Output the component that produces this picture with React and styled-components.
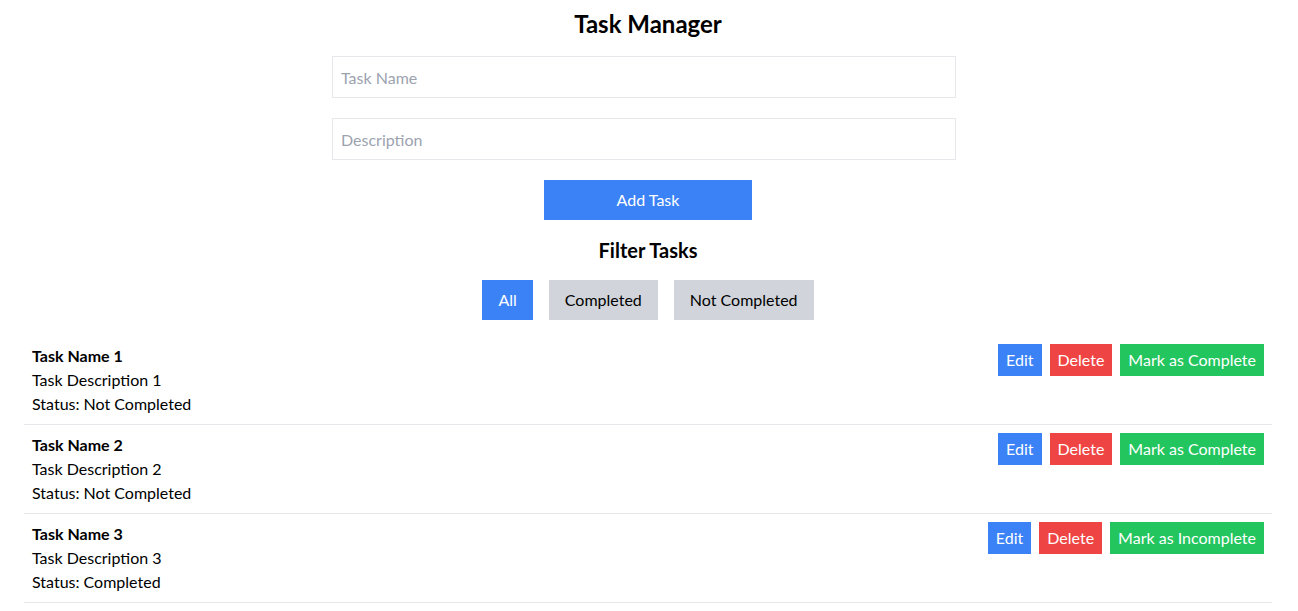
import React, { useState } from "react";
import styled, { createGlobalStyle } from "styled-components";

const GlobalStyle = createGlobalStyle`
  * {
    box-sizing: border-box;
  }
  body {
    margin: 0;
    background: #ffffff;
    color: #000000;
    font-family: "Segoe UI", Lato, "Noto Sans", sans-serif;
    font-size: 16px;
    line-height: 24px;
  }
`;

const Container = styled.div`
  width: 1248px;
  margin: 0 0 0 24px;
  padding-top: 8px;
`;

const Title = styled.h1`
  margin: 0 0 16px;
  font-size: 24px;
  line-height: 32px;
  font-weight: 700;
  text-align: center;
`;

const Form = styled.form`
  display: flex;
  flex-direction: column;
  align-items: center;
  gap: 20px;
`;

const Input = styled.input`
  width: 624px;
  height: 42px;
  margin-right: 8px;
  padding: 8px;
  border: 1px solid #e5e7eb;
  font: inherit;
  color: #111827;
  outline: none;

  &::placeholder {
    color: #9ca3af;
  }
`;

const Button = styled.button`
  border: none;
  font: inherit;
  line-height: 24px;
  cursor: pointer;
  color: ${(p) => (p.$tone === "gray" ? "#000000" : "#ffffff")};
  background: ${(p) =>
    ({
      blue: "#3b82f6",
      red: "#ef4444",
      green: "#22c55e",
      gray: "#d1d5db",
    })[p.$tone]};
  padding: ${(p) => (p.$small ? "4px 8px" : "8px 16px")};
`;

const AddButton = styled(Button)`
  width: 208px;
`;

const SubTitle = styled.h2`
  margin: 16px 0;
  font-size: 20px;
  line-height: 28px;
  font-weight: 700;
  text-align: center;
`;

const FilterBar = styled.div`
  display: flex;
  justify-content: center;
  gap: 16px;
  margin-bottom: 16px;
`;

const List = styled.ul`
  list-style: none;
  margin: 0;
  padding: 0;
`;

const Row = styled.li`
  display: flex;
  justify-content: space-between;
  align-items: flex-start;
  padding: 8px;
  border-bottom: 1px solid #e5e7eb;
`;

const Info = styled.div`
  display: flex;
  flex-direction: column;
`;

const Name = styled.div`
  font-weight: 700;
`;

const Actions = styled.div`
  display: flex;
  gap: 8px;
`;

const initialTasks = [
  { id: 1, name: "Task Name 1", description: "Task Description 1", completed: false },
  { id: 2, name: "Task Name 2", description: "Task Description 2", completed: false },
  { id: 3, name: "Task Name 3", description: "Task Description 3", completed: true },
];

export default function App() {
  const [tasks, setTasks] = useState(initialTasks);
  const [filter, setFilter] = useState("all");

  const toggle = (id) =>
    setTasks(tasks.map((t) => (t.id === id ? { ...t, completed: !t.completed } : t)));

  const shown = tasks.filter((t) =>
    filter === "all" ? true : filter === "done" ? t.completed : !t.completed
  );

  return (
    <>
      <GlobalStyle />
      <Container>
        <Title>Task Manager</Title>
        <Form onSubmit={(e) => e.preventDefault()}>
          <Input placeholder="Task Name" />
          <Input placeholder="Description" />
          <AddButton type="submit" $tone="blue">
            Add Task
          </AddButton>
        </Form>
        <SubTitle>Filter Tasks</SubTitle>
        <FilterBar>
          <Button $tone={filter === "all" ? "blue" : "gray"} onClick={() => setFilter("all")}>
            All
          </Button>
          <Button $tone={filter === "done" ? "blue" : "gray"} onClick={() => setFilter("done")}>
            Completed
          </Button>
          <Button $tone={filter === "todo" ? "blue" : "gray"} onClick={() => setFilter("todo")}>
            Not Completed
          </Button>
        </FilterBar>
        <List>
          {shown.map((t) => (
            <Row key={t.id}>
              <Info>
                <Name>{t.name}</Name>
                <div>{t.description}</div>
                <div>Status: {t.completed ? "Completed" : "Not Completed"}</div>
              </Info>
              <Actions>
                <Button $small $tone="blue">Edit</Button>
                <Button $small $tone="red" onClick={() => setTasks(tasks.filter((x) => x.id !== t.id))}>
                  Delete
                </Button>
                <Button $small $tone="green" onClick={() => toggle(t.id)}>
                  {t.completed ? "Mark as Incomplete" : "Mark as Complete"}
                </Button>
              </Actions>
            </Row>
          ))}
        </List>
      </Container>
    </>
  );
}
